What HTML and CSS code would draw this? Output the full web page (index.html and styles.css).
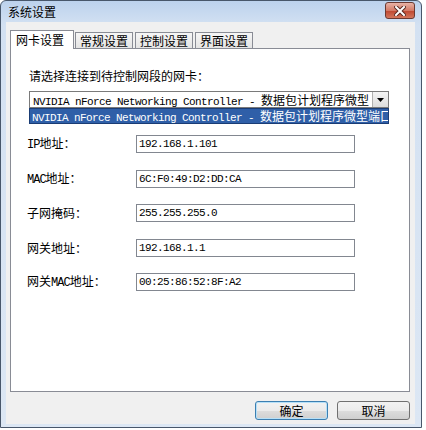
FILE: index.html
```html
<!DOCTYPE html>
<html lang="zh-CN">
<head>
    <meta charset="UTF-8">
    <title>系统设置</title>
    <link rel="stylesheet" href="styles.css">
</head>
<body>
    <div class="window">
        <div class="titlebar">
            <span class="title">系统设置</span>
            <div class="close-btn">
                <svg width="12" height="10" viewBox="0 0 12 10">
                    <path d="M2 1 L10 9 M10 1 L2 9" stroke="#5a2a22" stroke-width="4" stroke-linecap="square"/>
                    <path d="M2 1 L10 9 M10 1 L2 9" stroke="#fff" stroke-width="2" stroke-linecap="square"/>
                </svg>
            </div>
        </div>
        <div class="client">
            <div class="tabs">
                <div class="tab active">网卡设置</div>
                <div class="tab">常规设置</div>
                <div class="tab">控制设置</div>
                <div class="tab">界面设置</div>
            </div>
            <div class="panel">
                <div class="prompt">请选择连接到待控制网段的网卡：</div>
                <div class="combo">
                    <div class="combo-text"><span class="mono">NVIDIA nForce Networking Controller - </span>数据包计划程序微型</div>
                    <div class="combo-arrow">
                        <svg width="7" height="4" viewBox="0 0 7 4"><path d="M0 0 H7 L3.5 4 Z" fill="#000"/></svg>
                    </div>
                </div>
                <div class="combo-list"><span class="mono">NVIDIA nForce Networking Controller - </span>数据包计划程序微型端口</div>

                <div class="fields">
                    <div class="field-label"><span class="mono">IP</span>地址：</div>
                    <div class="input mono">192.168.1.101</div>

                    <div class="field-label"><span class="mono">MAC</span>地址：</div>
                    <div class="input mono">6C:F0:49:D2:DD:CA</div>

                    <div class="field-label">子网掩码：</div>
                    <div class="input mono">255.255.255.0</div>

                    <div class="field-label">网关地址：</div>
                    <div class="input mono">192.168.1.1</div>

                    <div class="field-label">网关<span class="mono">MAC</span>地址：</div>
                    <div class="input mono">00:25:86:52:8F:A2</div>
                </div>
            </div>
            <div class="buttons">
                <button class="btn btn-default">确定</button>
                <button class="btn">取消</button>
            </div>
        </div>
    </div>
</body>
</html>
```

FILE: styles.css
```css
body {
    margin: 0;
    background-color: #fff;
    font-family: "Noto Sans CJK SC", sans-serif;
    font-size: 12px;
    color: #000;
}
.window {
    width: 422px;
    height: 428px;
    box-sizing: border-box;
    border: 1px solid #48576b;
    border-radius: 6px 6px 0 0;
    background: linear-gradient(#bcd2ed, #d3e1f2 24px, #dce7f4);
    padding: 0 6px 3px 5px;
    display: flex;
    flex-direction: column;
}
.titlebar {
    height: 23px;
    display: flex;
    align-items: center;
    justify-content: space-between;
    padding-left: 2px;
}
.title {
    font-size: 12px;
    line-height: 14px;
    margin-top: 1px;
}
.close-btn {
    width: 30px;
    height: 17px;
    box-sizing: border-box;
    margin-top: -2px;
    border: 1px solid #6b3a32;
    border-radius: 3px;
    background: linear-gradient(#e8b3a6, #d47a66 50%, #c04a33 55%, #d3765c);
    display: flex;
    align-items: center;
    justify-content: center;
}
.client {
    flex: 1;
    background-color: #f0f0f0;
    padding: 8px 5px 4px 4px;
    display: flex;
    flex-direction: column;
}
.tabs {
    display: flex;
    align-items: flex-end;
    height: 18px;
}
.tab {
    height: 16px;
    box-sizing: border-box;
    border: 1px solid #898c95;
    border-bottom: none;
    background: linear-gradient(#f6f6f6, #e4e4e4);
    padding: 0 4px;
    line-height: 15px;
    margin-left: 2px;
}
.tab.active {
    height: 19px;
    width: 64px;
    margin-left: 0;
    margin-right: -1px;
    padding: 1px 0 0 5px;
    background: #fff;
    position: relative;
    z-index: 1;
    margin-bottom: -1px;
}
.panel {
    height: 344px;
    box-sizing: border-box;
    border: 1px solid #898c95;
    background-color: #fff;
    padding: 20px 20px 0 18px;
}
.prompt {
    line-height: 14px;
}
.mono {
    font-family: "Liberation Mono", monospace;
    font-size: 11px;
    letter-spacing: -0.6px;
}
.combo {
    margin-top: 8px;
    height: 17px;
    box-sizing: border-box;
    border: 1px solid #7a7a7a;
    display: flex;
    align-items: stretch;
    width: 360px;
}
.combo-text {
    flex: 1;
    padding-left: 3px;
    line-height: 15px;
    white-space: nowrap;
    overflow: hidden;
}
.combo-arrow {
    width: 15px;
    border-left: 1px solid #b0b0b0;
    background: linear-gradient(#f4f4f4, #dcdcdc);
    display: flex;
    align-items: center;
    justify-content: center;
}
.combo-list {
    width: 360px;
    height: 16px;
    box-sizing: border-box;
    border: 1px solid #1a3c74;
    background-color: #2f5fa8;
    color: #fff;
    padding-left: 2px;
    line-height: 14px;
    white-space: nowrap;
    overflow: hidden;
}
.fields {
    margin-top: 11px;
    margin-left: -2px;
    display: grid;
    grid-template-columns: 109px 219px;
    row-gap: 16.5px;
    align-items: center;
}
.field-label {
    line-height: 14px;
}
.field-label .mono {
    font-size: 12px;
    letter-spacing: -1px;
}
.input {
    height: 18px;
    box-sizing: border-box;
    border: 1px solid #828790;
    padding-left: 2px;
    line-height: 16px;
    background-color: #fff;
}
.buttons {
    display: flex;
    justify-content: flex-end;
    gap: 9px;
    margin-top: 9px;
}
.btn {
    width: 73px;
    height: 19px;
    box-sizing: border-box;
    border: 1px solid #707070;
    border-radius: 3px;
    background: linear-gradient(#f2f2f2, #ebebeb 50%, #dddddd 51%, #cfcfcf);
    font-family: "Noto Sans CJK SC", sans-serif;
    font-size: 12px;
    line-height: 15px;
    padding: 0;
}
.btn-default {
    border-color: #3c7fb1;
    box-shadow: inset 0 0 0 1px #b6e0f8;
}
```
